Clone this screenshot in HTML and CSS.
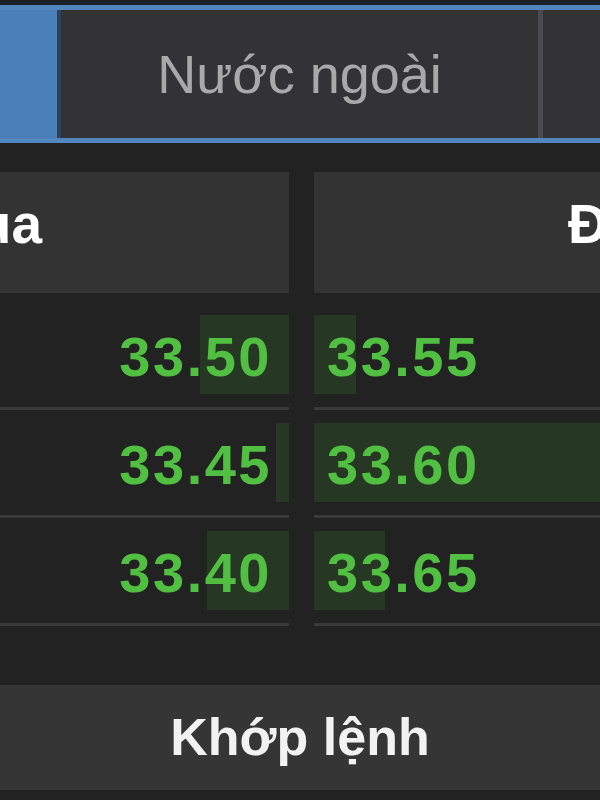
FILE: index.html
```html
<!DOCTYPE html>
<html lang="vi">
<head>
    <meta charset="UTF-8">
    <meta name="viewport" content="width=device-width, initial-scale=1.0">
    <title>Bảng giá</title>
    <link rel="stylesheet" href="styles.css">
</head>
<body>
    <div class="topbar"></div>

    <div class="tabs">
        <div class="tab tab-active"></div>
        <div class="tab tab-foreign">Nước ngoài</div>
        <div class="tab tab-more"></div>
    </div>

    <div class="board">
        <div class="board-head">
            <div class="head-cell head-buy"><span>Mua</span></div>
            <div class="head-cell head-sell"><span>Đặt bán</span></div>
        </div>

        <div class="board-rows">
            <div class="cell cell-buy"><div class="vol" style="width: 89px"></div><span class="price">33.50</span></div>
            <div class="cell cell-sell"><div class="vol" style="width: 42px"></div><span class="price">33.55</span></div>

            <div class="cell cell-buy"><div class="vol" style="width: 13px"></div><span class="price">33.45</span></div>
            <div class="cell cell-sell"><div class="vol" style="width: 286px"></div><span class="price">33.60</span></div>

            <div class="cell cell-buy"><div class="vol" style="width: 82px"></div><span class="price">33.40</span></div>
            <div class="cell cell-sell"><div class="vol" style="width: 71px"></div><span class="price">33.65</span></div>
        </div>
    </div>

    <div class="match-bar">Khớp lệnh</div>
</body>
</html>
```

FILE: styles.css
```css
* {
    margin: 0;
    padding: 0;
    box-sizing: border-box;
}

body {
    background: #222222;
    font-family: "Liberation Sans", Arial, sans-serif;
    width: 600px;
    height: 800px;
    overflow: hidden;
}

.topbar {
    height: 5px;
    background: #1c2029;
}

/* tabs */
.tabs {
    display: flex;
    height: 138px;
    border-top: 5px solid #5286bf;
    border-bottom: 5px solid #5286bf;
}

.tab {
    background: #333335;
}

.tab-active {
    width: 57px;
    background: #4a80b8;
}

.tab-foreign {
    width: 481px;
    border-left: 4px solid #2c4058;
    color: #a9a9a9;
    font-size: 54px;
    display: flex;
    justify-content: center;
    align-items: center;
}

.tab-more {
    flex-grow: 1;
    border-left: 5px solid #4a4a50;
}

/* order book */
.board-head,
.board-rows {
    display: grid;
    grid-template-columns: 289px 286px;
    column-gap: 25px;
}

.board-head {
    margin-top: 29px;
}

.head-cell {
    height: 121px;
    background: #333333;
    color: #ffffff;
    font-size: 55px;
    font-weight: bold;
    line-height: 55px;
    padding-top: 25px;
    white-space: nowrap;
    overflow: hidden;
}

.head-buy span {
    display: inline-block;
    margin-left: -68px;
}

.head-sell {
    padding-left: 254px;
}

.board-rows {
    margin-top: 9px;
}

.cell {
    position: relative;
    height: 108px;
    border-bottom: 3px solid #3a3a3a;
    color: #50bf42;
    font-size: 56px;
    font-weight: bold;
    letter-spacing: 2.5px;
    line-height: 101px;
    padding-top: 4px;
}

.cell-buy {
    text-align: right;
    padding-right: 17px;
}

.cell-sell {
    padding-left: 13px;
}

.vol {
    position: absolute;
    top: 13px;
    height: 79px;
    background: #263823;
}

.cell-buy .vol {
    right: 0;
}

.cell-sell .vol {
    left: 0;
}

.price {
    position: relative;
}

.match-bar {
    margin-top: 59px;
    height: 105px;
    line-height: 105px;
    background: #353535;
    color: #f2f2f2;
    text-align: center;
    font-size: 52px;
    font-weight: bold;
}
```
